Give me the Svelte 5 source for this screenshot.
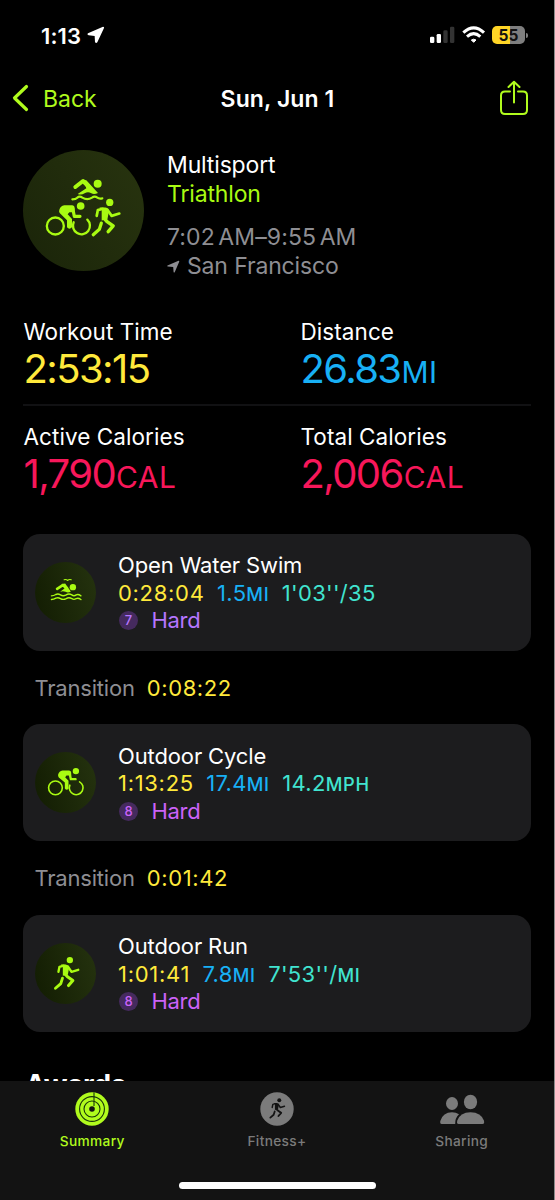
<script>
	const stats = [
		[
			{ label: "Workout Time", value: "2:53:15", unit: "", color: "yellow" },
			{ label: "Distance", value: "26.83", unit: "MI", color: "blue" },
		],
		[
			{ label: "Active Calories", value: "1,790", unit: "CAL", color: "red" },
			{ label: "Total Calories", value: "2,006", unit: "CAL", color: "red" },
		],
	];

	const legs = [
		{
			icon: "swim",
			name: "Open Water Swim",
			time: "0:28:04",
			distance: "1.5",
			pace: "1'03''/35",
			paceUnit: "",
			effort: 7,
			transition: "0:08:22",
		},
		{
			icon: "cycle",
			name: "Outdoor Cycle",
			time: "1:13:25",
			distance: "17.4",
			pace: "14.2",
			paceUnit: "MPH",
			effort: 8,
			transition: "0:01:42",
		},
		{
			icon: "run",
			name: "Outdoor Run",
			time: "1:01:41",
			distance: "7.8",
			pace: "7'53''/",
			paceUnit: "MI",
			effort: 8,
			transition: null,
		},
	];

	const tabs = ["Summary", "Fitness+", "Sharing"];
	let active = $state("Summary");
</script>

{#snippet runner()}
	<circle cx="148" cy="149" r="9.5" />
	<path d="M121 162 L136 162 Q144 163 146 171 L142 193 L127 196 L127 168Z" />
	<path class="line" d="M130 165.5 L117 169 L114 184" stroke-width="7" />
	<path class="line" d="M142 168 L153 184 L173 178" stroke-width="7" />
	<path class="line" d="M134 191 L141 199 L157 210 L144 225" stroke-width="9" />
	<path class="line" d="M126 203 L121 219 L105 233" stroke-width="8.5" />
{/snippet}

<div class="screen">
	<header class="status">
		<div class="clock">
			<span>1:13</span>
			<svg width="18" height="18" viewBox="263 80 54 54" fill="#fff">
				<path d="M266 102 L311 82 Q315 82 314 86 L294 129 Q290 134 287 128 L286 110 L268 108 Q262 106 266 102Z" />
			</svg>
		</div>
		<div class="signals">
			<svg width="25" height="18" viewBox="455 80 75 54">
				<rect x="455" y="112" width="13" height="19" rx="4" fill="#fff" />
				<rect x="475" y="104" width="13" height="27" rx="4" fill="#fff" />
				<rect x="495" y="93" width="13" height="38" rx="4" fill="#333" />
				<rect x="515" y="82" width="13" height="49" rx="4" fill="#333" />
			</svg>
			<svg class="wifi" width="24" height="18" viewBox="551 78 72 54" fill="none" stroke="#fff" stroke-width="9">
				<path d="M555 98 Q586 69 617 98" />
				<path d="M566 110 Q586 92 606 110" />
				<path d="M579 120 Q586 115 593 120 L586 127Z" fill="#fff" stroke-width="3" stroke-linejoin="round" />
			</svg>
			<div class="battery">55</div>
			<div class="nub"></div>
		</div>
	</header>

	<nav>
		<button class="back">
			<svg width="18" height="30" viewBox="0 0 18 30" fill="none" stroke="#b0fb1d" stroke-width="3.2" stroke-linecap="round" stroke-linejoin="round">
				<path d="M14.5 3.5 L2.5 15 L14.5 26.5" />
			</svg>
			<span>Back</span>
		</button>
		<h1>Sun, Jun 1</h1>
		<button class="share" aria-label="Share">
			<svg width="30" height="36" viewBox="0 0 30 36" fill="none" stroke="#b0fb1d" stroke-width="2" stroke-linecap="round" stroke-linejoin="round">
				<path d="M11 11.5 H6 Q2 11.5 2 15.5 V30 Q2 34 6 34 H24 Q28 34 28 30 V15.5 Q28 11.5 24 11.5 H19" />
				<path d="M15 22.5 V2 M9.5 7 L15 1.8 L20.5 7" />
			</svg>
		</button>
	</nav>

	<main>
		<section class="hero">
			<svg class="badge" width="121" height="121" viewBox="39 28 363 363">
				<!-- swimmer -->
				<circle cx="263" cy="129" r="12" />
				<path class="line" d="M196 139 L219 121 L236 138" stroke-width="12" />
				<path d="M219 117 L229 119 L264 157 Q252 163 244 158 Q234 151 224 158 Q214 164 203 160 L229 143Z" />
				<path class="line" d="M187 176 Q197 176 202 171 Q209 165 217 171 Q232 180 246 171 Q254 165 262 171 Q267 175 277 173" stroke-width="6.5" />
				<!-- cyclist -->
				<circle class="line" cx="136" cy="256" r="25.5" stroke-width="7" />
				<path class="line" d="M191 245 A25.5 25.5 0 1 0 232 237" stroke-width="7" />
				<circle cx="212" cy="196" r="11.5" />
				<path d="M148 207 Q151 196 163 194 H187 Q194 195 194 202 V215 H178 L173 221 L186 235 V260 Q178 268 171 260 V239 L149 217 Q146 212 148 207Z" />
				<path class="line" d="M188 202 L193 227 H210" stroke-width="9.5" />
				<!-- runner -->
				<g transform="translate(129 14) scale(1.15)">
					{@render runner()}
				</g>
			</svg>
			<div class="about">
				<p>Multisport</p>
				<p class="kind">Triathlon</p>
				<p class="when">7:02 AM–9:55 AM</p>
				<p class="where">
					<svg width="13" height="13" viewBox="0 0 13 13" fill="#8e8e93">
						<path d="M0.5 5.5 L11.5 0.8 Q12.5 0.7 12.2 1.7 L7.7 12.2 Q7 13 6.6 12 L6.2 7 L0.8 6.6 Q-0.2 6 0.5 5.5Z" />
					</svg>
					<span>San Francisco</span>
				</p>
			</div>
		</section>

		<section class="stats">
			{#each stats as row}
				<div class="row">
					{#each row as stat}
						<div class="stat">
							<div class="label">{stat.label}</div>
							<div class="value {stat.color}">{stat.value}<small>{stat.unit}</small></div>
						</div>
					{/each}
				</div>
			{/each}
		</section>

		<section class="legs">
			{#each legs as leg}
				<article>
					{#if leg.icon === "swim"}
						<svg class="badge small" width="61" height="61" viewBox="43 96 182 182">
							<circle cx="156" cy="171" r="9.5" />
							<path class="line" d="M109 176 L126 165 L138 174" stroke-width="8" />
							<path d="M122 162 L133 160 L150 184 Q142 190 134 185 Q127 181 118 185 L131 175Z" />
							<path class="line" d="M130 149 Q136 147 140 151 Q145 147 151 149" stroke-width="3.4" />
							<path class="line" d="M92 197 Q99 197 105 193 Q112 190 119 194 Q127 199 136 194 Q144 189 153 194 Q159 199 166 194 Q172 191 180 197" stroke-width="4.2" />
							<path class="line" d="M92 208 Q99 208 105 204 Q112 201 119 205 Q127 210 136 205 Q144 200 153 205 Q159 210 166 205 Q172 202 180 208" stroke-width="4.2" />
						</svg>
					{:else if leg.icon === "cycle"}
						<svg class="badge small" width="61" height="61" viewBox="43 96 182 182">
							<circle class="line" cx="104" cy="203" r="20.5" stroke-width="4.8" />
							<path class="line" d="M147 195 A20.5 20.5 0 1 0 176 185" stroke-width="4.8" />
							<circle cx="165" cy="153" r="9.5" />
							<path d="M112 163 Q115 152 125 151 H145 Q151 152 151 158 V166 H137 L133 171 L143 182 V205 Q138 213 132 205 V187 L114 172 Q111 168 112 163Z" />
							<path class="line" d="M146 158 L150 177 H164" stroke-width="7" />
						</svg>
					{:else}
						<svg class="badge small" width="61" height="61" viewBox="44 98 182 182">
							{@render runner()}
						</svg>
					{/if}
					<div class="info">
						<h2>{leg.name}</h2>
						<div class="metrics">
							<span class="yellow time">{leg.time}</span>
							<span class="blue">{leg.distance}<small>MI</small></span>
							<span class="teal">{leg.pace}<small>{leg.paceUnit}</small></span>
						</div>
						<div class="effort" class:high={leg.effort > 7}>
							<span class="level">{leg.effort}</span>
							<span>Hard</span>
						</div>
					</div>
				</article>
				{#if leg.transition}
					<div class="transition">
						<span>Transition</span>
						<span class="yellow time">{leg.transition}</span>
					</div>
				{/if}
			{/each}
		</section>

		<h3>Awards</h3>
	</main>

	<footer>
		<div class="tabs">
			{#each tabs as tab}
				<button class="tab" class:active={tab === active} onclick={() => (active = tab)}>
					{#if tab === "Summary"}
						<svg width="34" height="34" viewBox="0 0 34 34">
							<circle cx="17" cy="17" r="16.7" fill="currentColor" />
							<g fill="none" stroke="#17330a" stroke-width="1.1">
								<circle cx="17" cy="17" r="12.4" />
								<circle cx="17" cy="17" r="8" />
								<path d="M19 0.5 V14" />
							</g>
							<circle cx="17" cy="17" r="2.8" fill="#131313" />
						</svg>
					{:else if tab === "Fitness+"}
						<svg width="34" height="34" viewBox="0 0 34 34">
							<circle cx="17" cy="17" r="16.7" fill="currentColor" />
							<g class="dark" transform="translate(-11.5 -22.8) scale(0.208)">
								{@render runner()}
							</g>
						</svg>
					{:else}
						<svg width="46" height="34" viewBox="0 0 46 34" fill="currentColor">
							<ellipse cx="13" cy="11.5" rx="6" ry="6.5" />
							<path d="M2.6 32 Q0.8 32 1.3 29 Q4 20.3 13 20.3 Q17 20.3 20 22.3 Q16 26 16.2 32Z" />
							<ellipse cx="31.5" cy="10" rx="6.6" ry="7.3" />
							<path d="M19.5 32 Q17.5 32 18.2 28.8 Q21 20.3 31.5 20.3 Q42 20.3 45 28.8 Q45.7 32 43.5 32Z" />
						</svg>
					{/if}
					<span>{tab}</span>
				</button>
			{/each}
		</div>
		<div class="home"></div>
	</footer>
</div>

<style>
	:global(body) {
		background: #8a8a8a;
	}

	.screen {
		position: relative;
		width: 554px;
		height: 1200px;
		overflow: hidden;
		background: #000;
		color: #fff;
		font-family: Inter, "Liberation Sans", sans-serif;
	}

	button {
		padding: 0;
		border: none;
		background: none;
		font: inherit;
		color: inherit;
		cursor: pointer;
	}

	h1, h2, h3, p {
		margin: 0;
	}

	svg {
		display: block;
		flex: none;
	}

	.yellow { color: #ffe93b; }
	.blue { color: #18b0f5; }
	.red { color: #f7175a; }
	.teal { color: #41e4d0; }

	.status {
		display: flex;
		justify-content: space-between;
		box-sizing: border-box;
		height: 71px;
		padding: 26px 26px 0 41px;
	}

	.clock {
		display: flex;
		gap: 6px;
		font-size: 22px;
		font-weight: 600;
		line-height: 20px;
		letter-spacing: 0.1px;
	}

	.signals {
		display: flex;
	}

	.wifi {
		margin: 0 6.5px 0 7px;
	}

	.battery {
		width: 33px;
		height: 18px;
		border-radius: 5px;
		background: linear-gradient(90deg, #ffd526 54%, #7e7e7e 54%);
		color: #111;
		font-size: 15.5px;
		font-weight: 700;
		line-height: 19px;
		text-align: center;
	}

	.nub {
		width: 2px;
		height: 5px;
		margin: 7px 0 0 1px;
		border-radius: 0 2px 2px 0;
		background: #7e7e7e;
	}

	nav {
		display: grid;
		grid-template-columns: 1fr auto 1fr;
		align-items: center;
		height: 54px;
		padding: 0 25px 0 12px;
	}

	.back {
		display: flex;
		align-items: center;
		gap: 13px;
		color: #b0fb1d;
		font-size: 23px;
		letter-spacing: 0;
	}

	.back span, h1 {
		padding-top: 1px;
	}

	h1 {
		margin-left: 14px;
		font-size: 23px;
		font-weight: 600;
		letter-spacing: 0.1px;
	}

	.share {
		justify-self: end;
	}

	main {
		padding: 25px 23px 0;
	}

	.hero {
		display: flex;
		gap: 23px;
	}

	.badge {
		border-radius: 50%;
		background: linear-gradient(60deg, #1a2409, #28340f);
		fill: #a9fb12;
	}

	.badge.small {
		background: linear-gradient(75deg, #121c02, #25330f);
	}

	.line {
		fill: none;
		stroke: #a9fb12;
		stroke-linecap: round;
		stroke-linejoin: round;
	}

	.dark {
		fill: #131313;
	}

	.dark :global(.line) {
		stroke: #131313;
	}

	.about {
		padding-top: 1px;
		font-size: 23px;
		line-height: 29px;
		letter-spacing: -0.15px;
	}

	.kind {
		color: #a9fb12;
	}

	.when {
		margin-top: 14px;
		letter-spacing: 0.1px;
		word-spacing: -3px;
	}

	.when, .where {
		color: #8e8e93;
	}

	.where {
		display: flex;
		align-items: center;
		gap: 7px;
	}

	.stats {
		padding-top: 20px;
	}

	.row {
		display: grid;
		grid-template-columns: 277px 1fr;
		height: 88px;
		padding: 15px 0 0 0.5px;
	}

	.row + .row {
		border-top: 2px solid #111113;
	}

	.label {
		font-size: 22.5px;
		line-height: 32px;
		letter-spacing: 0.07px;
	}

	.value {
		font-size: 40px;
		font-weight: 400;
		line-height: 42px;
		letter-spacing: -1.6px;
	}

	small {
		font-size: 0.83em;
		font-weight: 500;
		letter-spacing: 0.7px;
	}

	.value small {
		margin-left: 1px;
		font-size: 30px;
		font-weight: 400;
		letter-spacing: 0.5px;
	}

	.legs {
		padding-top: 24.6px;
	}

	article {
		display: flex;
		align-items: center;
		box-sizing: border-box;
		height: 117px;
		padding-left: 12px;
		gap: 22px;
		border-radius: 17px;
		background: #1c1c1e;
	}

	.info {
		padding-top: 2.4px;
		font-size: 22px;
		line-height: 27.5px;
	}

	h2 {
		height: 27.5px;
		font-size: 22px;
		font-weight: 400;
		letter-spacing: -0.13px;
	}

	.metrics {
		display: flex;
		gap: 12.5px;
		height: 27.5px;
		letter-spacing: 0.3px;
	}

	.time {
		letter-spacing: 0.7px;
	}

	.effort {
		display: flex;
		align-items: center;
		gap: 13.5px;
		height: 27.5px;
		color: #b575ff;
		letter-spacing: -0.3px;
	}

	.effort.high {
		color: #cb62f8;
	}

	.level {
		width: 19px;
		height: 19px;
		margin-left: 1px;
		border-radius: 50%;
		background: #452a5e;
		font-size: 13px;
		font-weight: 500;
		line-height: 19px;
		text-align: center;
		letter-spacing: 0;
	}

	.transition {
		display: flex;
		gap: 12px;
		height: 73.5px;
		padding-left: 11.5px;
		font-size: 22px;
		line-height: 74px;
		color: #8e8e93;
		letter-spacing: -0.2px;
	}

	.transition .yellow {
		color: #ffe93b;
		letter-spacing: 0.6px;
	}

	h3 {
		margin: 35px 0 0 2px;
		font-size: 28px;
		font-weight: 700;
		line-height: 36px;
		letter-spacing: -0.3px;
	}

	footer {
		position: absolute;
		inset: 1081px 0 0;
		box-sizing: border-box;
		background: #131313;
	}

	.tabs {
		display: grid;
		grid-template-columns: repeat(3, 1fr);
		padding-top: 11px;
	}

	.tab {
		display: flex;
		flex-direction: column;
		align-items: center;
		color: #7b7b7b;
		font-size: 13.7px;
		font-weight: 500;
		line-height: 20px;
		letter-spacing: 0.35px;
	}

	.tab span {
		margin-top: 4.5px;
	}

	.tab.active {
		color: #b0fb1d;
	}

	.home {
		width: 197px;
		height: 7px;
		margin: 31px auto 0;
		border-radius: 4px;
		background: #fff;
	}
</style>
